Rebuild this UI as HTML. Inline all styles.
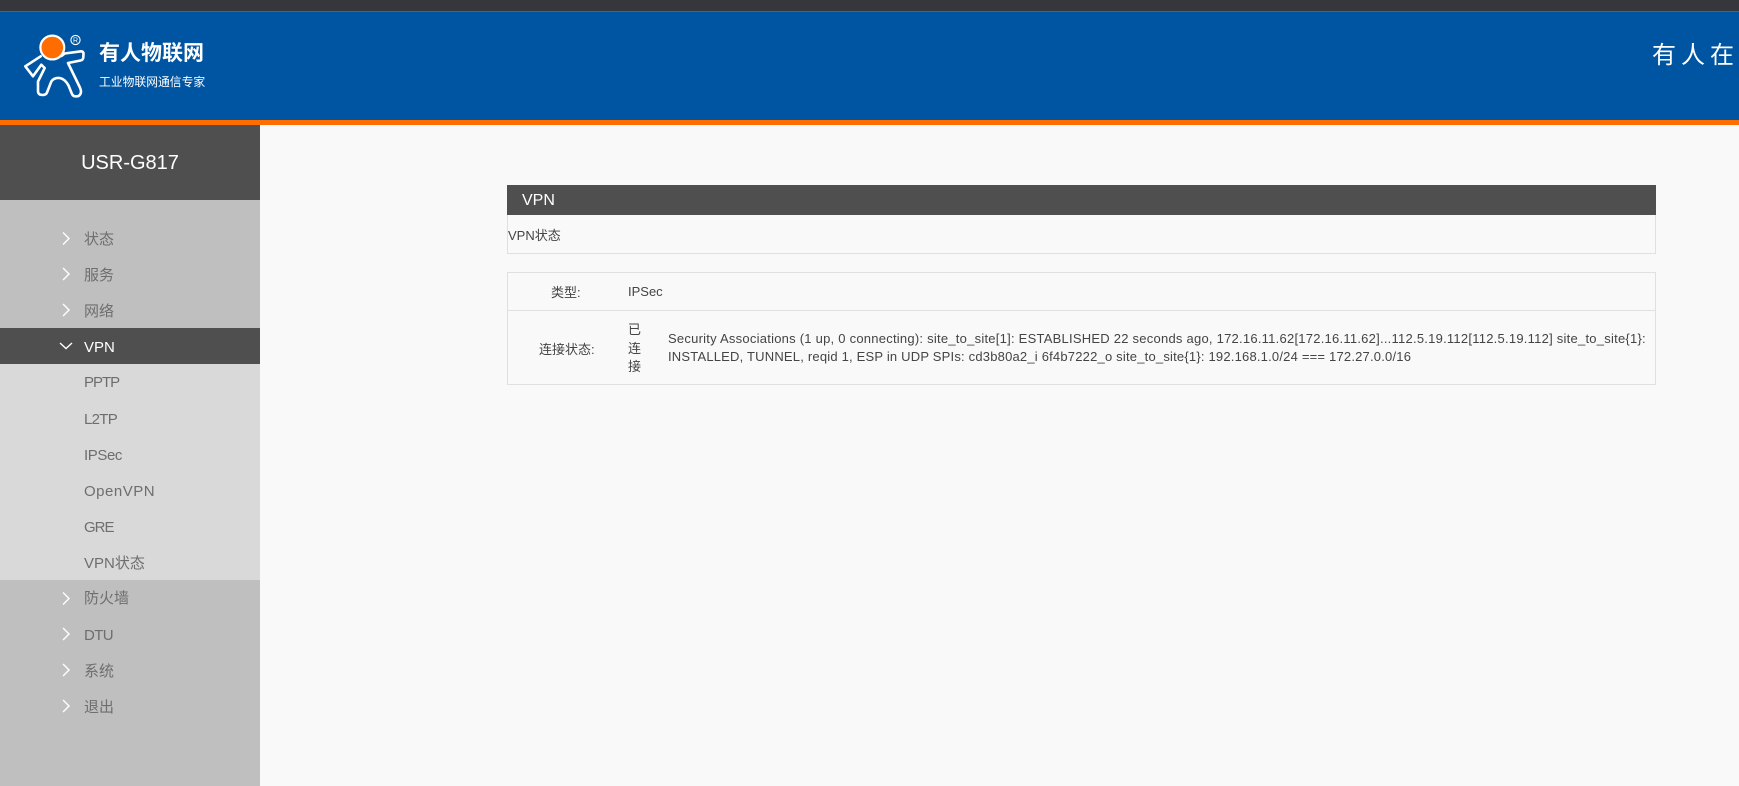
<!DOCTYPE html>
<html lang="zh-CN">
<head>
<meta charset="utf-8">
<title>USR-G817</title>
<style>
html,body{margin:0;padding:0;width:1739px;height:786px;overflow:hidden;background:#f9f9f9;font-family:"Liberation Sans","Noto Sans CJK SC",sans-serif;}
.a{position:absolute;white-space:nowrap;}
.item{position:absolute;left:84px;font-size:15px;line-height:36px;height:36px;color:#6e6e6e;white-space:nowrap;}
</style>
</head>
<body>
<div class="a" style="left:0;top:0;width:1739px;height:11px;background:#36373a"></div>
<div class="a" style="left:0;top:11px;width:1739px;height:1px;background:#5f6062"></div>
<div class="a" style="left:0;top:12px;width:1739px;height:108px;background:#0055a2"></div>
<div class="a" style="left:0;top:120px;width:1739px;height:5px;background:#ff6c00"></div>

<svg class="a" style="left:0;top:12px" width="100" height="108" viewBox="0 12 100 108">
  <path d="M61.5 56 L64.7 53.5 L81 51.3 Q83.5 51.3 83.5 54 L83.3 57.5 Q83 60 80.5 60.5 L68 63 L79.7 87 Q81.5 91 80.8 93 Q79.8 96.3 77 96.3 L75 96.3 Q73 96.3 72 94 L68.5 85.5 Q65 79 59.7 78 Q54 77.5 51.3 81.5 L47 92.5 Q46 95 42.5 95 L40.5 94.7 Q38 94 38 91 L38 81.5 L44.7 68 L41.3 64.7 L33 76.3 L25.3 66.3 L40.7 56.3" fill="none" stroke="#fff" stroke-width="2.6" stroke-linejoin="round" stroke-linecap="round"/>
  <circle cx="52.3" cy="47.5" r="11.9" fill="#ff6c00" stroke="#fff" stroke-width="2.2"/>
  <circle cx="75.5" cy="40" r="4.6" fill="none" stroke="#fff" stroke-width="1.1"/>
  <text x="75.5" y="42.6" font-size="7" font-family="Liberation Sans" fill="#fff" text-anchor="middle">R</text>
</svg>
<div class="a" style="left:99px;top:39px;font-size:21px;line-height:30px;font-weight:700;color:#fff">有人物联网</div>
<div class="a" style="left:99px;top:73px;font-size:11.8px;line-height:18px;color:#fff">工业物联网通信专家</div>
<div class="a" style="left:1652px;top:39px;font-size:24px;line-height:34px;letter-spacing:5px;color:#fff">有人在</div>

<div class="a" style="left:0;top:125px;width:260px;height:661px;background:#bfbfbf"></div>
<div class="a" style="left:0;top:125px;width:260px;height:75px;background:#4f4f4f;color:#fff;font-size:20px;line-height:76px;text-align:center">USR-G817</div>
<div class="a" style="left:0;top:328px;width:260px;height:36px;background:#4f4f4f"></div>
<div class="a" style="left:0;top:364px;width:260px;height:216px;background:#d9d9d9"></div>

<svg class="a" style="left:0;top:200px" width="80" height="540" viewBox="0 200 80 540" fill="none" stroke="#fff" stroke-width="1.4">
  <path d="M63 232.5 L69 238.5 L63 244.5"/>
  <path d="M63 268 L69 274 L63 280"/>
  <path d="M63 304 L69 310 L63 316"/>
  <path d="M60 343 L66 348.5 L72 343"/>
  <path d="M63 592.5 L69 598.5 L63 604.5"/>
  <path d="M63 628 L69 634 L63 640"/>
  <path d="M63 664 L69 670 L63 676"/>
  <path d="M63 700 L69 706 L63 712"/>
</svg>

<div class="item" style="top:222px">状态</div>
<div class="item" style="top:258px">服务</div>
<div class="item" style="top:294px">网络</div>
<div class="item" style="top:330px;color:#fff">VPN</div>
<div class="item" style="top:365px;letter-spacing:-1px">PPTP</div>
<div class="item" style="top:402px;letter-spacing:-.7px">L2TP</div>
<div class="item" style="top:438px;letter-spacing:-.4px">IPSec</div>
<div class="item" style="top:474px;letter-spacing:.5px">OpenVPN</div>
<div class="item" style="top:510px;letter-spacing:-1px">GRE</div>
<div class="item" style="top:546px">VPN状态</div>
<div class="item" style="top:581px">防火墙</div>
<div class="item" style="top:618px;letter-spacing:-.6px">DTU</div>
<div class="item" style="top:654px">系统</div>
<div class="item" style="top:690px">退出</div>

<div class="a" style="left:507px;top:185px;width:1149px;height:30px;background:#4f4f4f;color:#fff;font-size:16px;line-height:31px;text-indent:15px">VPN</div>
<div class="a" style="left:507px;top:215px;width:1147px;height:38px;border:1px solid #e0e0e0;border-top:0;color:#444;font-size:13px;line-height:42px;text-indent:0">VPN状态</div>

<div class="a" style="left:507px;top:272px;width:1147px;height:111px;border:1px solid #e0e0e0"></div>
<div class="a" style="left:508px;top:310px;width:1147px;height:1px;background:#e0e0e0"></div>
<div class="a" style="left:551px;top:283px;font-size:13px;line-height:20px;color:#444">类型:</div>
<div class="a" style="left:628px;top:282px;font-size:13px;line-height:20px;color:#444">IPSec</div>
<div class="a" style="left:539px;top:340px;font-size:13px;line-height:20px;color:#444">连接状态:</div>
<div class="a" style="left:628px;top:321px;font-size:13px;line-height:18.5px;color:#444">已<br>连<br>接</div>
<div class="a" style="left:668px;top:330px;font-size:13px;line-height:18px;color:#444;letter-spacing:.24px">Security Associations (1 up, 0 connecting): site_to_site[1]: ESTABLISHED 22 seconds ago, 172.16.11.62[172.16.11.62]...112.5.19.112[112.5.19.112] site_to_site{1}:</div>
<div class="a" style="left:668px;top:348px;font-size:13px;line-height:18px;color:#444;letter-spacing:.2px">INSTALLED, TUNNEL, reqid 1, ESP in UDP SPIs: cd3b80a2_i 6f4b7222_o site_to_site{1}: 192.168.1.0/24 === 172.27.0.0/16</div>
</body>
</html>
